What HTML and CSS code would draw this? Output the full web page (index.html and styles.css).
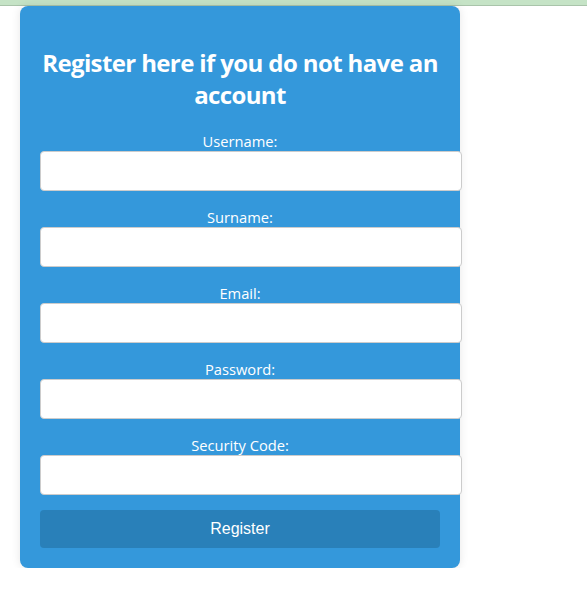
FILE: index.html
```html
<!DOCTYPE html>
<html lang="en">
<head>
<meta charset="utf-8">
<title>Register</title>
<link rel="stylesheet" href="styles.css">
</head>
<body>
<div class="topbar"></div>
<div class="page">
  <form class="card">
    <h2 class="title">Register here if you do not have an account</h2>
    <div class="field">
      <label class="label" for="username">Username:</label>
      <input class="input" id="username" type="text">
    </div>
    <div class="field">
      <label class="label" for="surname">Surname:</label>
      <input class="input" id="surname" type="text">
    </div>
    <div class="field">
      <label class="label" for="email">Email:</label>
      <input class="input" id="email" type="text">
    </div>
    <div class="field">
      <label class="label" for="password">Password:</label>
      <input class="input" id="password" type="password">
    </div>
    <div class="field">
      <label class="label" for="code">Security Code:</label>
      <input class="input" id="code" type="text">
    </div>
    <button class="button" type="button">Register</button>
  </form>
</div>
</body>
</html>
```
FILE: styles.css
```css
html, body {
  margin: 0;
  padding: 0;
  background: #ffffff;
}
body {
  font-family: "Open Sans", "Noto Sans", sans-serif;
}
.topbar {
  height: 5px;
  background: #c5e3c6;
  border-bottom: 1px solid #a9c4aa;
}
.page {
  padding-left: 20px;
}
.card {
  width: 400px;
  padding: 20px;
  background: #3498db;
  border-radius: 8px;
  box-shadow: 0 0 10px rgba(0, 0, 0, 0.1);
}
.title {
  margin: 21px -4px 21px;
  font-size: 24px;
  line-height: 32px;
  font-weight: 700;
  color: #ffffff;
  text-align: center;
  letter-spacing: -0.62px;
}
.field {
  margin-bottom: 17px;
}
.field:last-of-type {
  margin-bottom: 15px;
}
.label {
  display: block;
  text-align: center;
  color: #ffffff;
  font-size: 14.7px;
  line-height: 19px;
}
.input {
  display: block;
  width: 100%;
  height: 18px;
  padding: 10px;
  margin: 0;
  border: 1px solid #cccccc;
  border-radius: 4px;
  background: #ffffff;
  font-family: "Liberation Sans", Arial, sans-serif;
  font-size: 16px;
}
.button {
  display: block;
  width: 100%;
  height: 38px;
  border: none;
  border-radius: 4px;
  background: #2980b9;
  color: #ffffff;
  font-family: "Liberation Sans", Arial, sans-serif;
  font-size: 16px;
  padding: 0;
}
```
